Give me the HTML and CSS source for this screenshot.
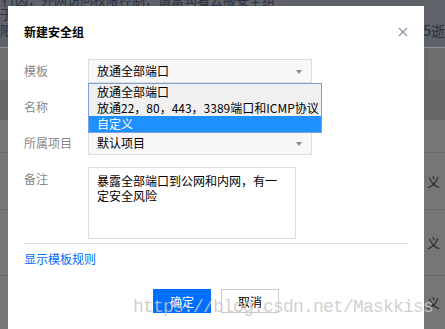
FILE: index.html
```html
<!DOCTYPE html>
<html>
<head>
  <title>新建安全组</title>
  <link rel="stylesheet" href="styles.css">
</head>
<body>
  <div class="page">
    <div class="page-top">
      <div class="top-line">行因，外网访问权限控制，请富勾看云服安全组</div>
      <div class="top-line2">于无</div>
      <div class="top-line3"><span>限创</span><span class="right-note">~25逝</span></div>
    </div>
    <div class="page-row head-row"><span class="cell"></span></div>
    <div class="page-row dark-row"></div>
    <div class="page-row short-row"></div>
    <div class="page-row tall-row"><span class="mark">义</span></div>
    <div class="page-row mid-row"><span class="mark">义</span></div>
    <div class="page-row last-row"><span class="mark">义</span></div>
  </div>

  <div class="dialog">
    <div class="dialog-header">
      <span class="dialog-title">新建安全组</span>
      <svg class="close" width="10" height="10" viewBox="0 0 10 10">
        <path d="M1 1 L9 9 M9 1 L1 9" stroke="#8795a8" stroke-width="1.2" fill="none"/>
      </svg>
    </div>

    <div class="form">
      <div class="form-row">
        <label>模板</label>
        <div class="control">
          <div class="select">放通全部端口<span class="arrow"></span></div>
          <ul class="dropdown">
            <li>放通全部端口</li>
            <li>放通22，80，443，3389端口和ICMP协议</li>
            <li class="active">自定义</li>
          </ul>
        </div>
      </div>
      <div class="form-row">
        <label>名称</label>
        <div class="control"><div class="input"></div></div>
      </div>
      <div class="form-row">
        <label>所属项目</label>
        <div class="control">
          <div class="select">默认项目<span class="arrow"></span></div>
        </div>
      </div>
      <div class="form-row">
        <label>备注</label>
        <div class="control">
          <div class="textarea">暴露全部端口到公网和内网，有一定安全风险</div>
        </div>
      </div>
    </div>

    <div class="divider"></div>
    <a class="rules-link" href="#">显示模板规则</a>

    <div class="buttons">
      <button class="btn primary">确定</button>
      <button class="btn">取消</button>
    </div>
  </div>

  <div class="watermark">https://blog.csdn.net/Maskkiss</div>
</body>
</html>
```

FILE: styles.css
```css
body {
  margin: 0;
  width: 445px;
  height: 329px;
  overflow: hidden;
  position: relative;
  background-color: #777777;
  font-family: "Noto Sans CJK SC", "Microsoft YaHei", sans-serif;
  font-size: 12px;
}

/* dimmed page behind the dialog */
.page {
  width: 445px;
}

.page-top {
  height: 47px;
  background-color: #5f6269;
  color: #2a3040;
  font-size: 13px;
  line-height: 14px;
  overflow: hidden;
}

.top-line {
  margin-top: -7px;
  padding-left: 2px;
  white-space: nowrap;
}

.top-line3 {
  display: flex;
  justify-content: space-between;
  margin-top: 2px;
}

.right-note {
  font-size: 14px;
}

.page-row {
  border-top: 1px solid #6a6a6a;
  background-color: #767676;
  display: flex;
  justify-content: flex-end;
  align-items: center;
  color: #222;
  font-size: 13px;
}

.head-row {
  height: 31px;
  border-top-color: #8a93a2;
  background-color: #6e6e6e;
}

.head-row .cell {
  align-self: stretch;
  width: 18px;
  border-left: 1px solid #626262;
}

.dark-row {
  height: 39px;
  background-color: #686868;
}

.short-row {
  height: 32px;
}

.tall-row {
  height: 56px;
}

.mid-row {
  height: 65px;
}

.last-row {
  height: 53px;
}

.mark {
  width: 18px;
}

/* dialog */
.dialog {
  position: absolute;
  left: 8px;
  top: 6px;
  bottom: 0;
  width: 384px;
  padding: 0 16px;
  background-color: #ffffff;
}

.dialog-header {
  display: flex;
  justify-content: space-between;
  align-items: center;
  padding-top: 18px;
  height: 16px;
}

.dialog-title {
  font-weight: bold;
  color: #000;
  line-height: 16px;
}

.form {
  margin-top: 19px;
  display: flex;
  flex-direction: column;
  gap: 12px;
}

.form-row {
  display: flex;
}

.form-row label {
  width: 64px;
  line-height: 24px;
  color: #888888;
}

.control {
  position: relative;
}

.select {
  position: relative;
  box-sizing: border-box;
  width: 224px;
  height: 24px;
  padding-left: 8px;
  line-height: 22px;
  border: 1px solid #dddddd;
  background-color: #f7f7f7;
  color: #000;
}

.arrow {
  position: absolute;
  right: 9px;
  top: 10px;
  border-left: 3px solid transparent;
  border-right: 3px solid transparent;
  border-top: 4px solid #888888;
}

.input {
  box-sizing: border-box;
  width: 224px;
  height: 24px;
  border: 1px solid #dddddd;
}

.dropdown {
  position: absolute;
  left: 0;
  top: 24px;
  z-index: 2;
  width: 234px;
  box-sizing: border-box;
  margin: 0;
  padding: 0;
  list-style: none;
  background-color: #f0f0f0;
  border: 1px solid #7fa1d4;
}

.dropdown li {
  padding-left: 8px;
  height: 16px;
  line-height: 16px;
  color: #000;
  white-space: nowrap;
}

.dropdown li.active {
  background-color: #1e90ff;
  color: #ffffff;
}

.textarea {
  box-sizing: border-box;
  width: 208px;
  height: 72px;
  padding: 5px 8px;
  line-height: 15px;
  border: 1px solid #dddddd;
  color: #000;
}

.divider {
  margin-top: 4px;
  height: 1px;
  background-color: #dddddd;
}

.rules-link {
  display: inline-block;
  margin-top: 7px;
  line-height: 16px;
  color: #006eff;
  text-decoration: none;
}

.buttons {
  display: flex;
  justify-content: center;
  gap: 10px;
  margin-top: 22px;
}

.btn {
  box-sizing: border-box;
  width: 58px;
  height: 24px;
  padding: 0;
  font-family: inherit;
  font-size: 12px;
  border: 1px solid #cccccc;
  background-color: #ffffff;
  color: #000;
}

.btn.primary {
  border-color: #006eff;
  background-color: #006eff;
  color: #ffffff;
}

.watermark {
  position: absolute;
  left: 133px;
  top: 297px;
  font-family: "Liberation Mono", monospace;
  font-size: 18px;
  letter-spacing: -0.8px;
  color: rgba(200, 200, 200, 0.85);
  white-space: nowrap;
}
```
